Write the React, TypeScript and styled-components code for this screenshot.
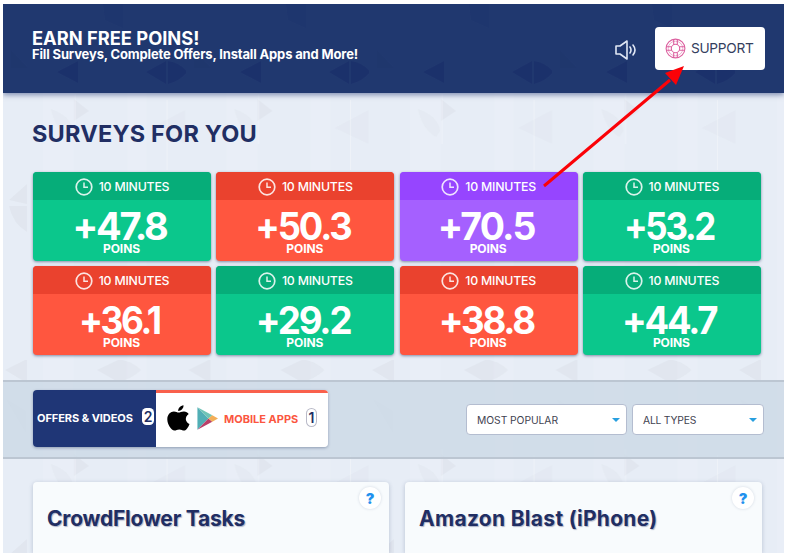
import React from "react";
import styled, { createGlobalStyle } from "styled-components";

const GlobalStyle = createGlobalStyle`
  * { box-sizing: border-box; }
  body { margin: 0; background: #fff; font-family: Inter, "Open Sans", sans-serif; overflow: hidden; }
`;

const Page = styled.main`
  position: relative;
  width: 781px;
  height: 549px;
  margin: 4px 0 0 3px;
  display: flex;
  flex-direction: column;
  overflow: hidden;
  background: #e7edf6;
  isolation: isolate;
`;

const Backdrop = styled.svg`
  position: absolute;
  top: 0;
  left: 0;
  z-index: -1;
`;

/* Text run with its own tracking. */
const Run = styled.span<{ $ls?: number }>`
  white-space: nowrap;
  letter-spacing: ${(p) => p.$ls ?? 0}px;
`;

const Header = styled.header`
  position: relative;
  isolation: isolate;
  flex: none;
  display: flex;
  align-items: center;
  height: 89px;
  padding: 0 19px 0 29px;
  color: #fff;
  background: #21386f;
  box-shadow: 0 2px 5px rgba(31, 54, 116, 0.5);
`;

const Intro = styled.div`
  flex: 1;
  display: flex;
  flex-direction: column;
  padding-bottom: 8px;
`;

const IntroTitle = styled(Run)`
  font-size: 18.3px;
  line-height: 18px;
  font-weight: 650;
`;

const IntroText = styled(Run)`
  font-size: 13px;
  line-height: 14px;
  font-weight: 700;
`;

const Speaker = styled.svg`
  margin-right: 17px;
  margin-top: 3px;
`;

const SupportButton = styled.button`
  display: flex;
  align-items: center;
  gap: 5px;
  width: 110px;
  height: 43px;
  padding: 0 0 1px 10px;
  border: 0;
  border-radius: 4px;
  background: #fff;
  color: #34405e;
  font: 400 13.7px Inter, sans-serif;
`;

const SurveyTitle = styled.h1`
  flex: none;
  margin: 25px 0 0 29px;
  height: 54px;
  font-size: 23.5px;
  line-height: 31px;
  font-weight: 650;
  color: #212e63;
`;

const SurveyGrid = styled.section`
  flex: none;
  display: grid;
  grid-template-columns: repeat(4, 178px);
  grid-auto-rows: 89px;
  column-gap: 5.3px;
  row-gap: 5px;
  margin-left: 30px;
`;

const tones = {
  green: ["#06ad79", "#0bc78c"],
  red: ["#ea422e", "#ff563f"],
  purple: ["#9645ff", "#a560ff"],
};
type Tone = keyof typeof tones;

const SurveyCard = styled.article<{ $tone: Tone }>`
  display: flex;
  flex-direction: column;
  align-items: center;
  overflow: hidden;
  border-radius: 4px;
  color: #fff;
  background: ${(p) => tones[p.$tone][1]};
  box-shadow: 0 1px 3px rgba(45, 60, 100, 0.55);
`;

const Duration = styled.div<{ $tone: Tone }>`
  align-self: stretch;
  display: flex;
  align-items: center;
  justify-content: center;
  gap: 6px;
  height: 28px;
  padding-top: 1px;
  font-size: 12.3px;
  font-weight: 550;
  background: ${(p) => tones[p.$tone][0]};
`;

const Value = styled(Run)<{ $stretch: number }>`
  font-size: 38px;
  line-height: 30px;
  margin: 11px 5px 0 0;
  font-weight: 750;
  transform: scaleX(${(p) => p.$stretch});
`;

const Unit = styled(Run)`
  font-size: 12px;
  line-height: 13px;
  margin: 1px 1px 0 0;
  font-weight: 750;
`;

const FilterBar = styled.nav`
  flex: none;
  display: flex;
  align-items: center;
  height: 79px;
  margin-top: 25px;
  padding: 0 20px 0 30px;
  background: rgba(198, 212, 226, 0.66);
  border-top: 2px solid #bcc6d2;
  border-bottom: 2px solid #bcc6d2;
`;

const Tabs = styled.div`
  display: flex;
  height: 57px;
  margin: 0 auto 2px 0;
  border-radius: 4px;
  overflow: hidden;
  box-shadow: 0 1px 3px rgba(45, 60, 100, 0.4);
`;

const Tab = styled.div<{ $active?: boolean }>`
  display: flex;
  align-items: center;
  width: ${(p) => (p.$active ? 172 : 123)}px;
  padding: ${(p) => (p.$active ? "0 0 3px 11px" : "0 0 1px 4px")};
  font-size: 11px;
  font-weight: 750;
  color: ${(p) => (p.$active ? "#fb5640" : "#fff")};
  background: ${(p) => (p.$active ? "#fff" : "#1f3676")};
  border-top: ${(p) => (p.$active ? "3px solid #f9604c" : "0")};
`;

const Count = styled.span<{ $outlined?: boolean }>`
  display: grid;
  place-items: center;
  width: ${(p) => (p.$outlined ? 9 : 12)}px;
  height: 17px;
  margin: 0 ${(p) => (p.$outlined ? 12 : 2)}px 3px auto;
  border-radius: 4.5px;
  font-size: 14px;
  line-height: 17px;
  font-weight: 600;
  color: #212e63;
  background: #fff;
  box-shadow: ${(p) => (p.$outlined ? "0 0 0 1px #b9bac8" : "none")};
`;

const Apple = styled.svg`
  margin-right: 6px;
`;

const Play = styled.svg`
  margin-right: 5px;
`;

const Select = styled.div<{ $w: number }>`
  display: flex;
  align-items: center;
  justify-content: space-between;
  width: ${(p) => p.$w}px;
  height: 31px;
  padding: 0 6px 0 10px;
  margin-left: 5px;
  border: 1px solid #b4bdd0;
  border-radius: 4px;
  background: #fff;
  color: #3f4350;
  font-size: 10.3px;
`;

const Caret = styled.i`
  border: 4px solid transparent;
  border-top-color: #289fdf;
  border-bottom: 0;
`;

const Offers = styled.section`
  flex: 1;
  display: grid;
  grid-template-columns: 356px 357px;
  column-gap: 16px;
  padding: 23px 0 0 30px;
`;

const Offer = styled.article`
  display: flex;
  justify-content: space-between;
  padding: 5px 8px 0 14px;
  border-radius: 4px 4px 0 0;
  background: #f8fbfd;
  box-shadow: 0 1px 4px rgba(60, 80, 120, 0.28);
`;

const OfferName = styled.h2`
  margin: 19px 0 0;
  font-size: 21px;
  line-height: 26px;
  font-weight: 650;
  color: #212e63;
  text-shadow: 1px 1px 1px rgba(33, 46, 99, 0.35);
`;

const Help = styled.span`
  display: grid;
  place-items: center;
  width: 22px;
  height: 22px;
  border-radius: 50%;
  background: #fff;
  color: #2191ee;
  font: 900 14.5px Inter, sans-serif;
  box-shadow: 0 0 3px rgba(60, 80, 120, 0.2);
`;

const Pointer = styled.svg`
  position: absolute;
  top: 0;
  left: 0;
  pointer-events: none;
`;

const Clock = () => (
  <svg width="18" height="18" viewBox="0 0 18 18" fill="none" stroke="#fff" strokeOpacity="0.85">
    <circle cx="9" cy="9" r="7.8" strokeWidth="1.7" />
    <path d="M9 4.500V9.300h4" strokeWidth="1.5" />
  </svg>
);

const surveys: { value: string; tone: Tone; ls: number; stretch: number }[] = [
  { value: "+47.8", tone: "green", ls: -2.2, stretch: 1 },
  { value: "+50.3", tone: "red", ls: -2.2, stretch: 0.955 },
  { value: "+70.5", tone: "purple", ls: -1.8, stretch: 0.985 },
  { value: "+53.2", tone: "green", ls: -2.5, stretch: 0.92 },
  { value: "+36.1", tone: "red", ls: -2.5, stretch: 0.93 },
  { value: "+29.2", tone: "green", ls: -2.2, stretch: 0.965 },
  { value: "+38.8", tone: "red", ls: -2.4, stretch: 0.965 },
  { value: "+44.7", tone: "green", ls: -2.3, stretch: 0.96 },
];

const Facets = () => (
  <Backdrop width="781" height="549">
    <defs>
      <pattern id="facets" width="183.5" height="355" patternUnits="userSpaceOnUse">
        <g fill="#d6dbe3" opacity="0.38">
          <path d="M71 95l15 12-15 10z" />
          <path d="M48 105q20 7 22 22l-4 6q-14-8-18-28z" opacity=".7" />
          <path d="M148 124l34-18v34z" opacity=".5" />
          <path d="M6 196l18-16v20zM6 202h18v26q-14-8-18-26z" />
          <path d="M2 11L24 0v24zM94 11l21-10v22zM115 0q14 2 23 11-9 9-23 12z" />
          <path d="M3 40l20 12v22z" opacity=".6" />
        </g>
        <path d="M40 0h31v355H40zM124 0h20v355h-20z" fill="#fff" opacity=".07" />
        <path d="M72 90v50M164 96v70" stroke="#fff" opacity=".3" />
      </pattern>
    </defs>
    <rect width="781" height="549" fill="url(#facets)" />
  </Backdrop>
);

const NavyFacets = () => (
  <Backdrop width="781" height="89">
    <defs>
      <pattern id="navy" width="183" height="89" patternUnits="userSpaceOnUse">
        <g fill="#172b68" opacity=".55">
          <path d="M75 57v22L54 68zM143 68l20-11v23zM165 57q13 2 19 11-7 9-19 12z" />
          <path d="M100 0h20v24l-18-8z" opacity=".4" />
          <path d="M8 46l17 18H8z" opacity=".3" />
        </g>
      </pattern>
    </defs>
    <rect width="781" height="89" fill="#20386f" />
    <rect width="781" height="89" fill="url(#navy)" />
  </Backdrop>
);

export default function App() {
  return (
    <>
      <GlobalStyle />
      <Page>
        <Facets />
        <Header>
          <NavyFacets />
          <Intro>
            <IntroTitle $ls={0}>EARN FREE POINS!</IntroTitle>
            <IntroText $ls={-0.15}>Fill Surveys, Complete Offers, Install Apps and More!</IntroText>
          </Intro>
          <Speaker width="24" height="22" viewBox="0 0 24 22" fill="none" stroke="#dfe6f4" strokeWidth="1.6">
            <path d="M2 7v8h4l7 5V2L6 7z" strokeLinejoin="round" />
            <path d="M16 8q2 3 0 6M19 6q4 5 0 10" strokeLinecap="round" />
          </Speaker>
          <SupportButton>
            <svg width="21" height="21" viewBox="0 0 21 21" fill="none" stroke="#dc609f" strokeWidth="1.1">
              <circle cx="10.5" cy="10.5" r="9.4" />
              <circle cx="10.5" cy="10.5" r="7.300" strokeWidth=".5" />
              <circle cx="10.5" cy="10.5" r="4.200" />
              <path d="M8.700 1.300v5.300M12.300 1.300v5.300M8.700 14.400v5.300M12.300 14.400v5.300M1.300 8.700h5.300M1.300 12.300h5.300M14.400 8.700h5.300M14.400 12.300h5.300" />
            </svg>
            <Run $ls={-0.3}>SUPPORT</Run>
          </SupportButton>
        </Header>
        <SurveyTitle>
          <Run $ls={0.2}>SURVEYS FOR YOU</Run>
        </SurveyTitle>
        <SurveyGrid>
          {surveys.map((s) => (
            <SurveyCard key={s.value} $tone={s.tone}>
              <Duration $tone={s.tone}>
                <Clock />
                <Run $ls={-0.2}>10 MINUTES</Run>
              </Duration>
              <Value $ls={s.ls} $stretch={s.stretch}>{s.value}</Value>
              <Unit $ls={-0.1}>POINS</Unit>
            </SurveyCard>
          ))}
        </SurveyGrid>
        <FilterBar>
          <Tabs>
            <Tab>
              <Run $ls={-0.05}>OFFERS &amp; VIDEOS</Run>
              <Count>2</Count>
            </Tab>
            <Tab $active>
              <Apple width="23" height="27" viewBox="0 0 23 27" fill="#000">
                <path d="M11.600 7.600C13 7.600 14.600 6.300 17 6.400c2 .1 3.700 1 4.700 2.500-4.300 2.700-3.500 8.300.8 10-.9 2.600-3.200 6.600-5.400 6.600-1.800 0-2.600-1.100-4.800-1.100-2.300 0-3.100 1.100-4.800 1.100C4.300 25.500.3 19.500.3 14.300c0-5 3.300-7.800 6.600-7.800 2 0 3.500 1.100 4.700 1.100zM11.200 6C11 3.300 13.500.7 16.500.3c.3 3-2.300 5.700-5.300 5.700z" />
              </Apple>
              <Play width="23" height="25" viewBox="0 0 24 25">
                <path d="M1.500.8v23.400L13 12.500z" fill="#50aeb5" />
                <path d="M1.500.8L17 9l-4 3.500z" fill="#6fc4b6" />
                <path d="M1.500 24.200L13 12.500l4 3.500z" fill="#b93f68" />
                <path d="M17 9l6 3.500-6 3.500-4-3.500z" fill="#f2ae58" />
              </Play>
              <Run $ls={0}>MOBILE APPS</Run>
              <Count $outlined>1</Count>
            </Tab>
          </Tabs>
          <Select $w={161}>
            <Run $ls={-0.05}>MOST POPULAR</Run>
            <Caret />
          </Select>
          <Select $w={132}>
            <Run $ls={-0.2}>ALL TYPES</Run>
            <Caret />
          </Select>
        </FilterBar>
        <Offers>
          <Offer>
            <OfferName>
              <Run $ls={-0.2}>CrowdFlower Tasks</Run>
            </OfferName>
            <Help>?</Help>
          </Offer>
          <Offer>
            <OfferName>
              <Run $ls={0.3}>Amazon Blast (iPhone)</Run>
            </OfferName>
            <Help>?</Help>
          </Offer>
        </Offers>
        <Pointer width="781" height="549">
          <path d="M541 182L667 76" stroke="#fb0207" strokeWidth="3" />
          <path d="M681 62L662 69l11 12z" fill="#fb0207" />
        </Pointer>
      </Page>
    </>
  );
}
